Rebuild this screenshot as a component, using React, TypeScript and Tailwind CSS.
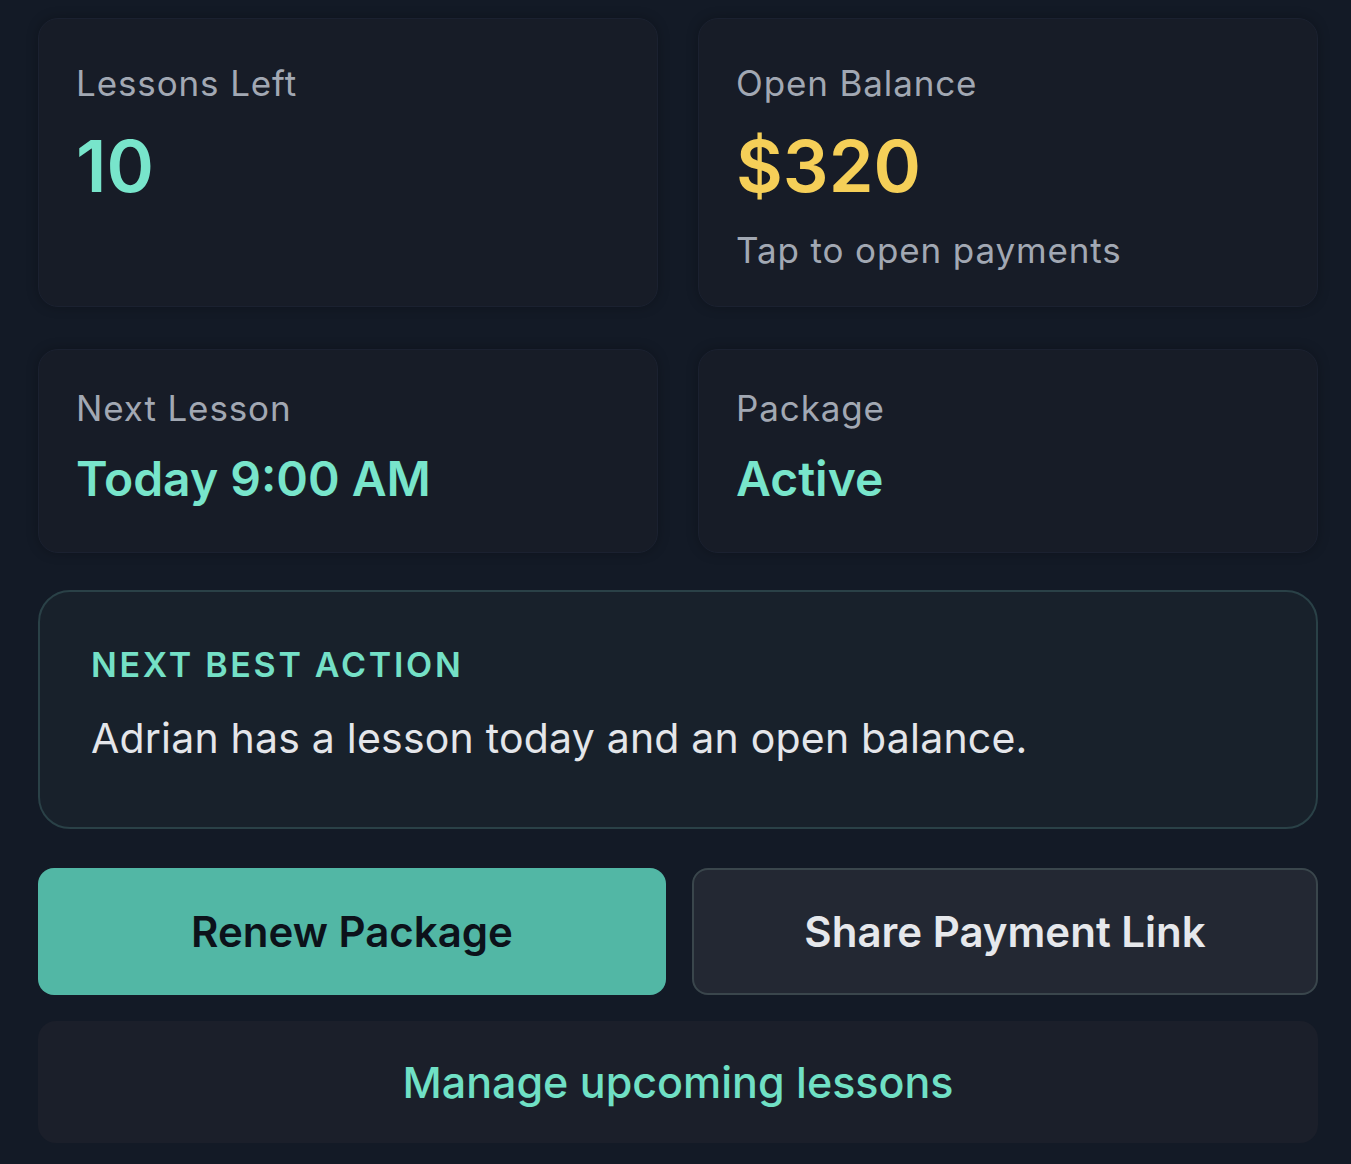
function StatCard({ label, value, valueClass, sub }: any) {
  return (
    <div className="rounded-[20px] bg-[#171c27] border border-[#1b2130] shadow-[0_0_12px_rgba(0,0,0,0.25)] px-[37px] pt-[40px] pb-[32px]">
      <p className="text-[35px] leading-[48px] tracking-[0.025em] text-[#a2a8b3]">{label}</p>
      <p className={valueClass}>{value}</p>
      {sub ? (
        <p className="mt-[24px] text-[35px] leading-[48px] tracking-[0.025em] text-[#a2a8b3]">{sub}</p>
      ) : null}
    </div>
  );
}

export default function App() {
  return (
    <div
      className="min-h-[1164px] bg-[#131a26] pl-[38px] pr-[33px] pt-[18px] pb-[22px]"
      style={{ fontFamily: "Inter, 'Noto Sans', sans-serif" }}
    >
      <div className="grid grid-cols-2 gap-x-[40px] gap-y-[42px]">
        <StatCard
          label="Lessons Left"
          value="10"
          valueClass="mt-[23px] text-[72px] leading-[72px] font-semibold text-[#78e5cb]"
        />
        <StatCard
          label="Open Balance"
          value="$320"
          valueClass="mt-[23px] text-[72px] leading-[72px] font-semibold text-[#f5cf58]"
          sub="Tap to open payments"
        />
        <div className="rounded-[20px] bg-[#171c27] border border-[#1b2130] shadow-[0_0_12px_rgba(0,0,0,0.25)] px-[37px] pt-[34px] pb-[43px]">
          <p className="text-[35px] leading-[48px] tracking-[0.025em] text-[#a2a8b3]">Next Lesson</p>
          <p className="mt-[17px] text-[48px] leading-[60px] font-semibold text-[#78e5cb]">Today 9:00 AM</p>
        </div>
        <div className="rounded-[20px] bg-[#171c27] border border-[#1b2130] shadow-[0_0_12px_rgba(0,0,0,0.25)] px-[37px] pt-[34px] pb-[43px]">
          <p className="text-[35px] leading-[48px] tracking-[0.025em] text-[#a2a8b3]">Package</p>
          <p className="mt-[17px] text-[48px] leading-[60px] font-semibold text-[#78e5cb]">Active</p>
        </div>
      </div>

      <div className="mt-[37px] rounded-[32px] border-2 border-[#2a4147] bg-[#18212b] px-[51px] pt-[51px] pb-[63px]">
        <p className="text-[34px] leading-[44px] font-semibold tracking-[0.08em] text-[#74e0c6]">NEXT BEST ACTION</p>
        <p className="mt-[25px] text-[41px] leading-[52px] tracking-[0.005em] text-[#e4e6ea]">
          Adrian has a lesson today and an open balance.
        </p>
      </div>

      <div className="mt-[39px] flex gap-[26px]">
        <button className="w-[628px] h-[127px] rounded-[16px] bg-[#52b7a5] text-[42px] font-semibold text-[#0c121a]">
          Renew Package
        </button>
        <button className="flex-1 h-[127px] rounded-[16px] border-2 border-[#3a464c] bg-[#232833] text-[42px] font-semibold text-[#e6e8ec]">
          Share Payment Link
        </button>
      </div>

      <button className="mt-[26px] w-full h-[122px] rounded-[18px] bg-[#1b1f2a] text-[43px] font-medium text-[#70e0c5]">
        Manage upcoming lessons
      </button>
    </div>
  );
}
